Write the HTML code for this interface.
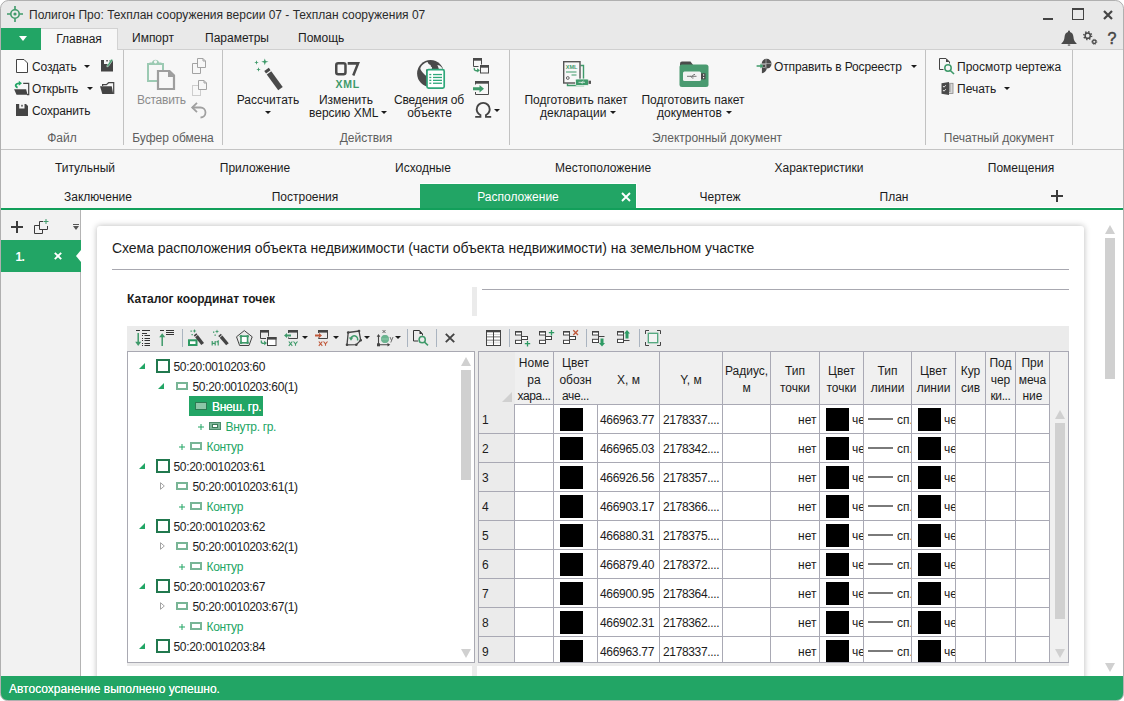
<!DOCTYPE html>
<html lang="ru">
<head>
<meta charset="utf-8">
<title>Полигон Про</title>
<style>
*{box-sizing:border-box;margin:0;padding:0}
html,body{width:1124px;height:701px;overflow:hidden;background:#fff}
body{font-family:"Liberation Sans",sans-serif;font-size:12px;color:#1c1c1c;position:relative}
.a{position:absolute}
.t{position:absolute;white-space:nowrap;line-height:14px;height:14px}
.c{text-align:center}
svg{position:absolute;overflow:visible}
#win{left:0;top:0;width:1124px;height:701px;border:1px solid #b5b5b5;border-radius:8px 8px 7px 7px;overflow:hidden;background:#fff}
#title{left:0;top:0;width:1124px;height:50px;background:#e9e9e9}
#ribbon{left:1px;top:50px;width:1122px;height:99px;background:#f7f7f7}
#ribline{left:1px;top:149px;width:1122px;height:1px;background:#c4c4c4}
.sep{position:absolute;top:50px;width:1px;height:95px;background:#c2c2c2}
.gl{color:#5e5e5e}
.dis{color:#9b9b9b}
.dd{position:absolute;width:0;height:0;border-left:3px solid transparent;border-right:3px solid transparent;border-top:3px solid #1c1c1c}
#dtabs{left:1px;top:150px;width:1122px;height:58px;background:#f7f7f7}
#gline{left:1px;top:208px;width:1122px;height:2px;background:#22a565}
#status{left:1px;top:676px;width:1122px;height:24px;background:#22a565}
#lpanel{left:1px;top:210px;width:79px;height:466px;background:#f2f2f2}
#card{left:97px;top:226px;width:987px;height:460px;background:#fff;border-radius:3px;box-shadow:0 0 6px rgba(0,0,0,.28)}
.hl{position:absolute;height:1px;background:#a8a8b0}
.tsep{position:absolute;top:329px;width:1px;height:18px;background:#aab4c0}
.g{color:#22a565}
</style>
</head>
<body>

<div class="a" id="win">
<!-- TITLE + MENU -->
<div class="a" id="title" style="left:-1px;top:-1px"></div>
</div>
<!-- app icon -->
<svg style="left:7px;top:6px" width="16" height="16" viewBox="0 0 16 16"><g fill="none" stroke="#3f9a6a" stroke-width="1.6"><circle cx="8" cy="8" r="4.2"/><path d="M8 0v3.5M8 12.5V16M0 8h3.5M12.5 8H16"/></g><circle cx="8" cy="8" r="1.6" fill="#3f9a6a"/></svg>
<div class="t" style="left:29px;top:8px;color:#2b2b2b">Полигон Про: Техплан сооружения версии 07 - Техплан сооружения 07</div>
<!-- window controls -->
<div class="a" style="left:1043px;top:18px;width:10px;height:2px;background:#444"></div>
<div class="a" style="left:1072px;top:8px;width:12px;height:12px;border:1px solid #444;border-top-width:2px"></div>
<svg style="left:1103px;top:10px" width="10" height="10" viewBox="0 0 10 10"><path d="M1 1l8 8M9 1l-8 8" stroke="#444" stroke-width="2.2" fill="none"/></svg>
<!-- bell -->
<svg style="left:1061px;top:30px" width="16" height="16" viewBox="0 0 16 16"><path d="M8 0.6a1 1 0 0 1 1 1v0.5c2.3 0.6 3.3 2.6 3.5 5.2c0.2 2.6 0.9 4.3 3 6v0.7H0.5v-0.7c2.1-1.7 2.8-3.4 3-6C3.700 4.700 4.700 2.700 7 2.100V1.600a1 1 0 0 1 1-1z" fill="#4a4a4a"/><rect x="6.800" y="14.500" width="2.400" height="1.100" fill="#4a4a4a"/></svg>
<!-- gears -->
<svg style="left:1083px;top:31px" width="15" height="14" viewBox="0 0 15 14"><g fill="none" stroke="#4a4a4a"><circle cx="4.700" cy="4.700" r="2.600" stroke-width="1.500"/><circle cx="4.700" cy="4.700" r="3.900" stroke-width="1.500" stroke-dasharray="1.400 1.660"/><circle cx="11.300" cy="10.800" r="1.700" stroke-width="1.300"/><circle cx="11.300" cy="10.800" r="2.500" stroke-width="1" stroke-dasharray="1 0.960"/></g></svg>
<div class="t" style="left:1107.500px;top:30.500px;font-size:16px;color:#444;line-height:16px;height:16px;-webkit-text-stroke:0.500px #444">?</div>

<!-- menu row -->
<div class="a" style="left:1px;top:28px;width:40px;height:22px;background:#22a565"></div>
<svg style="left:19px;top:36px" width="8" height="5" viewBox="0 0 8 5"><path d="M0 0H8L4 5Z" fill="#fff"/></svg>
<div class="a" style="left:41px;top:28px;width:77px;height:22px;background:#f7f7f7;border:1px solid #d2d2d2;border-bottom:none;border-left:none"></div>
<div class="t c" style="left:41px;top:32px;width:76px">Главная</div>
<div class="t" style="left:132px;top:31px">Импорт</div>
<div class="t" style="left:205px;top:31px">Параметры</div>
<div class="t" style="left:298px;top:31px">Помощь</div>
<div class="a" style="left:118px;top:49px;width:1005px;height:1px;background:#d0d0d0"></div>

<!-- RIBBON -->
<div class="a" id="ribbon"></div>
<div class="a" id="ribline"></div>
<div class="sep" style="left:123px"></div>
<div class="sep" style="left:222px"></div>
<div class="sep" style="left:509px"></div>
<div class="sep" style="left:925px"></div>
<div class="sep" style="left:1072px"></div>

<!-- File group -->
<svg style="left:16px;top:59px" width="12" height="14" viewBox="0 0 12 14"><path d="M0.500 0.500H8L11.500 4V13.500H0.500Z" fill="#fff" stroke="#444" stroke-width="1"/></svg>
<div class="t" style="left:32px;top:60px;letter-spacing:-0.150px">Создать</div>
<div class="dd" style="left:84px;top:65px"></div>
<svg style="left:101px;top:59px" width="13" height="13" viewBox="0 0 13 13"><path d="M0 1H3V5H8.500V1H12V12.600H0Z" fill="#444"/><rect x="5.300" y="1" width="1.500" height="1.500" fill="#444"/><path d="M10.300 0L12 1L7.300 7.500L5.900 7.900L6 6.500Z" fill="#3f9a6a" stroke="#f7f7f7" stroke-width="0.500"/></svg>

<svg style="left:14px;top:81px" width="16" height="14" viewBox="0 0 16 14"><path d="M9.200 2.400H14.700V13.700H13" fill="none" stroke="#444" stroke-width="1.200"/><path d="M0.100 8.200H12.100L13.600 13.800H2.500Z" fill="#444"/><path d="M3.600 6.600C0.800 5.500 1 2.400 5.200 2.300" fill="none" stroke="#22a565" stroke-width="1.800"/><path d="M4.800 -0.300L8 2.200L4.800 4.800Z" fill="#22a565"/></svg>
<div class="t" style="left:32px;top:82px;letter-spacing:-0.150px">Открыть</div>
<div class="dd" style="left:87px;top:87px"></div>
<svg style="left:100px;top:82px" width="15" height="12" viewBox="0 0 15 12"><path d="M2.600 4V2.600H6.400L8.600 0.700H13.700V12" fill="none" stroke="#444" stroke-width="1.200"/><path d="M0 4.200H11.700L13.200 12H2.300Z" fill="#444"/></svg>

<svg style="left:16px;top:104px" width="12" height="12" viewBox="0 0 12 12"><path d="M0 0h3.200v4.500h5.300V0H10L12 2V12H0Z" fill="#444"/><rect x="5.300" y="0.800" width="1.400" height="1.800" fill="#444"/></svg>
<div class="t" style="left:32px;top:104px;letter-spacing:-0.150px">Сохранить</div>
<div class="t c gl" style="left:32px;top:131px;width:60px">Файл</div>

<!-- Clipboard group -->
<svg style="left:147px;top:58px" width="29" height="33" viewBox="0 0 29 33"><path d="M1 6H16V23H1Z" fill="none" stroke="#9ccab3" stroke-width="2"/><path d="M2.500 6.500V4.500H5A3.600 3.600 0 0 1 12 4.500H14.500V6.500Z" fill="#9ccab3"/><circle cx="8.500" cy="3.800" r="1.600" fill="#f7f7f7"/><path d="M11 13H22.500L27 17.500V31H11Z" fill="#f7f7f7" stroke="#9e9e9e" stroke-width="2.200" stroke-linejoin="miter"/><path d="M21 12.500V19H27.500Z" fill="#9e9e9e"/></svg>
<div class="t dis" style="left:137px;top:93px;color:#8c8c8c;letter-spacing:-0.250px">Вставить</div>
<svg style="left:192px;top:58px" width="15" height="16" viewBox="0 0 15 16"><path d="M0.500 5.500H8.500V15.500H0.500Z" fill="#f7f7f7" stroke="#a3a3a3"/><path d="M5.500 0.500H11L13.500 3V9.500H5.500Z" fill="#f7f7f7" stroke="#a3a3a3"/><path d="M11 0.500V3H13.500" fill="none" stroke="#a3a3a3"/></svg>
<svg style="left:192px;top:80px" width="16" height="16" viewBox="0 0 16 16"><path d="M0.500 5.500H8.500V15.500H0.500Z" fill="none" stroke="#a3a3a3" stroke-dasharray="1 1"/><path d="M6.500 0.500H12L14.500 3V9.500H6.500Z" fill="#f7f7f7" stroke="#a3a3a3"/><path d="M12 0.500V3H14.500" fill="none" stroke="#a3a3a3"/></svg>
<svg style="left:191px;top:102px" width="16" height="16" viewBox="0 0 16 16"><path d="M1 5.500H9.500A5 5 0 0 1 9.500 15.500" fill="none" stroke="#a0a0a0" stroke-width="1.800"/><path d="M6 0.800L1.200 5.500L6 10.200" fill="none" stroke="#a0a0a0" stroke-width="1.800"/></svg>
<div class="t c gl" style="left:124px;top:131px;width:98px">Буфер обмена</div>

<!-- Actions group -->
<svg style="left:254px;top:58px" width="30" height="32" viewBox="0 0 30 32"><g fill="#3f9a6a"><path d="M10.800 0.500L11.700 3L14.500 3.800L11.700 4.600L10.800 7.200L9.900 4.600L7.200 3.800L9.900 3Z"/><path d="M2.500 2.200L3.100 3.900L4.800 4.500L3.100 5.100L2.500 6.800L1.900 5.100L0.200 4.500L1.900 3.900Z"/><path d="M4.500 9.200L5.100 10.900L6.800 11.500L5.100 12.100L4.500 13.800L3.900 12.100L2.200 11.500L3.900 10.900Z"/></g><g fill="#4a4a4a" transform="translate(1.300 1.300) rotate(-36 13 12.500)"><rect x="10.200" y="9.500" width="5.600" height="3"/><rect x="10.200" y="13.700" width="5.600" height="19.500"/></g></svg>
<div class="t c" style="left:228px;top:93px;width:80px">Рассчитать</div>
<div class="dd" style="left:265px;top:111px"></div>

<svg style="left:334.500px;top:62px" width="25" height="14" viewBox="0 0 26 14" preserveAspectRatio="none"><rect x="1.300" y="1.300" width="9.600" height="11" rx="2" fill="none" stroke="#4a4a4a" stroke-width="2.600"/><path d="M13.200 1.400H24L19 13.500" fill="none" stroke="#4a4a4a" stroke-width="2.600" stroke-linejoin="miter"/></svg>
<div class="t" style="left:335.500px;top:78px;font-size:10.500px;font-weight:bold;color:#3f9a6a;letter-spacing:0.700px;line-height:12px;height:12px">XML</div>
<div class="t c" style="left:300px;top:93px;width:92px">Изменить</div>
<div class="t" style="left:309px;top:106px">версию XML</div>
<div class="dd" style="left:381px;top:111px"></div>

<svg style="left:417px;top:60px" width="29" height="29" viewBox="0 0 29 29"><circle cx="13.500" cy="13.500" r="13.400" fill="#4a4a4a"/><path d="M3.300 8.500C3.800 6.500 5.500 4.300 8 2.900C9 2.300 10 2 10.600 2L11.300 3.600L12.400 4.400L13.600 5L13.900 6.500L15 7.200L14.800 9.500H9V15.800C7.500 14.500 5.500 12.500 4.500 11C3.800 10 3.400 9.300 3.300 8.500Z" fill="#f7f7f7"/><path d="M20.300 5L22.500 5.600C23.800 6.400 25 7.600 25.800 9H21.800L21.200 7Z" fill="#f7f7f7"/><rect x="10" y="9.700" width="17.200" height="18.400" rx="1.500" fill="#fff" stroke="#2fa87a" stroke-width="1.700"/><g fill="#2fa87a"><rect x="12.300" y="13.900" width="2" height="1.300"/><rect x="16" y="13.900" width="9" height="1.300"/><rect x="12.300" y="16.800" width="2" height="1.300"/><rect x="16" y="16.800" width="9" height="1.300"/><rect x="12.300" y="19.700" width="2" height="1.300"/><rect x="16" y="19.700" width="9" height="1.300"/><rect x="12.300" y="22.600" width="2" height="1.300"/><rect x="16" y="22.600" width="9" height="1.300"/></g></svg>
<div class="t c" style="left:382px;top:93px;width:94px;letter-spacing:-0.150px">Сведения об</div>
<div class="t c" style="left:382px;top:106px;width:95px">объекте</div>

<svg style="left:473px;top:58px" width="16" height="16" viewBox="0 0 16 16"><path d="M8.500 6.500V0.500H0.500V8.500H5.500" fill="none" stroke="#4a4a4a"/><rect x="0" y="0" width="9" height="2.700" fill="#4a4a4a"/><rect x="7.500" y="7.500" width="8" height="7.500" fill="#f7f7f7" stroke="#4a4a4a"/><rect x="7" y="7" width="9" height="2.700" fill="#4a4a4a"/><path d="M1.300 9.800C0.800 12.500 3 13.300 5 12.300" fill="none" stroke="#3f9a6a" stroke-width="1.300"/><path d="M4 10.200L7 12.200L4.300 14.600Z" fill="#3f9a6a"/></svg>
<svg style="left:473px;top:81px" width="16" height="14" viewBox="0 0 16 14"><path d="M2.500 3.500V1H15.500V13.500H2.500V11" fill="none" stroke="#4a4a4a"/><rect x="2" y="0" width="14" height="2.700" fill="#4a4a4a"/><path d="M0 6.200H6.500V4L11 7.700L6.500 11.400V9.200H0Z" fill="#3f9a6a"/></svg>
<svg style="left:475px;top:102px" width="17" height="16" viewBox="0 0 17 16"><path d="M0.200 14.900H5.400V13C3 11.800 1.700 9.700 1.700 7.300C1.700 3.600 4.600 0.900 8.200 0.900C11.800 0.900 14.700 3.600 14.700 7.300C14.700 9.700 13.400 11.800 11 13V14.900H16.200" fill="none" stroke="#444" stroke-width="1.900" stroke-linejoin="miter"/></svg>
<div class="dd" style="left:494px;top:109px"></div>
<div class="t c gl" style="left:316px;top:131px;width:100px">Действия</div>

<!-- E-doc group -->
<svg style="left:563px;top:61px" width="29" height="26" viewBox="0 0 29 26"><path d="M17.500 4.500H20.500V24.500H4.500V22.500" fill="none" stroke="#3f9a6a" stroke-width="1.400"/><rect x="0.700" y="0.700" width="16.300" height="21.300" fill="#f7f7f7" stroke="#555" stroke-width="1.400"/><text x="2.800" y="8.300" font-family="Liberation Sans" font-size="5.500" font-weight="bold" fill="#3f9a6a">XML</text><path d="M3 11H13.500M8.500 14H13.500" stroke="#3f9a6a" stroke-width="1.100"/><circle cx="4.800" cy="17" r="1.400" fill="none" stroke="#555" stroke-width="0.900"/><rect x="12.500" y="18" width="13" height="6.500" rx="1.200" fill="#3f9a6a" stroke="#f7f7f7" stroke-width="0.800"/><rect x="25.500" y="19.700" width="2.500" height="3.200" fill="#555"/><path d="M15.500 21.300H22M19 21.300L20.500 20M18 21.300L19.500 22.600" stroke="#fff" stroke-width="0.700" fill="none"/></svg>
<div class="t c" style="left:516px;top:93px;width:120px">Подготовить пакет</div>
<div class="t" style="left:540px;top:106px">декларации</div>
<div class="dd" style="left:610px;top:111px"></div>

<svg style="left:679px;top:61px" width="30" height="26" viewBox="0 0 30 26"><path d="M1 5V2.500Q1 0.500 3 0.500H11.500L14.500 4.500Z" fill="#4a4a4a"/><rect x="0.500" y="3.500" width="29" height="22.500" rx="2.500" fill="#4a9a70"/><rect x="4" y="10.500" width="18" height="9.500" rx="1.500" fill="#f2f2f2"/><rect x="22" y="12.300" width="4.500" height="6" fill="#4a4a4a"/><rect x="24" y="13.300" width="1.200" height="1.300" fill="#f2f2f2"/><rect x="24" y="16" width="1.200" height="1.300" fill="#f2f2f2"/><path d="M8 15.300H17.500M13 15.300L15 13.500H16M11.500 15.300L13.500 17H14.500" stroke="#555" stroke-width="0.800" fill="none"/></svg>
<div class="t c" style="left:633px;top:93px;width:120px">Подготовить пакет</div>
<div class="t" style="left:657px;top:106px">документов</div>
<div class="dd" style="left:726px;top:111px"></div>

<svg style="left:756px;top:58px" width="16" height="16" viewBox="0 0 16 16"><circle cx="10.600" cy="5.700" r="4.900" fill="#4a4a4a"/><path d="M5.900 7V15.200C8.300 14.700 10.200 13.200 10.900 10.400Z" fill="#4a4a4a"/><path d="M10 0.800V10.500M5.800 5.600H15.500" stroke="#cfcfcf" stroke-width="0.600"/><rect x="6.700" y="6.500" width="3" height="3" fill="#4a4a4a" stroke="#cfcfcf" stroke-width="0.600"/><path d="M0.600 7.300H4.400V5.600L7.400 8L4.400 10.400V8.700H0.600Z" fill="#3f9a6a"/></svg>
<div class="t" style="left:774px;top:60px;letter-spacing:-0.150px">Отправить в Росреестр</div>
<div class="dd" style="left:911px;top:65px"></div>
<div class="t c gl" style="left:637px;top:131px;width:160px">Электронный документ</div>

<!-- Print group -->
<svg style="left:939px;top:58px" width="16" height="17" viewBox="0 0 16 17"><path d="M10.500 5.500V4L7 0.500H0.500V11.500H4.500" fill="none" stroke="#444"/><path d="M7 0.500V4H10.500Z" fill="#444"/><circle cx="9" cy="10" r="3.200" fill="#f7f7f7" stroke="#3f9a6a" stroke-width="1.500"/><path d="M11.300 12.500L15 16" stroke="#3f9a6a" stroke-width="1.700"/></svg>
<div class="t" style="left:957px;top:60px">Просмотр чертежа</div>
<svg style="left:940.800px;top:82px" width="13" height="13" viewBox="0 0 13 13"><rect x="6" y="1.300" width="6" height="10.200" fill="#d6d6d6" stroke="#8a8a8a" stroke-width="0.800"/><path d="M0.500 1.200L8 0V13L0.500 11.800Z" fill="#4a4a4a"/><path d="M2 4L3 5.200L4.800 3.200M2 8L3 9.200L4.800 7.200" stroke="#f2f2f2" stroke-width="0.900" fill="none"/><path d="M8 3H9.500M8 5H9.500M8 7H9.500M8 9H9.500" stroke="#4a4a4a" stroke-width="0.800"/></svg>
<div class="t" style="left:957px;top:82px">Печать</div>
<div class="dd" style="left:1004px;top:87px"></div>
<div class="t c gl" style="left:929px;top:131px;width:140px">Печатный документ</div>

<!-- DOC TABS -->
<div class="a" id="dtabs"></div>
<div class="a" id="gline" style="background:#129f5a"></div>
<div class="t c" style="left:35px;top:161px;width:100px">Титульный</div>
<div class="t c" style="left:205px;top:161px;width:100px">Приложение</div>
<div class="t c" style="left:373px;top:161px;width:100px">Исходные</div>
<div class="t c" style="left:543px;top:161px;width:120px">Местоположение</div>
<div class="t c" style="left:759px;top:161px;width:120px">Характеристики</div>
<div class="t c" style="left:971px;top:161px;width:100px">Помещения</div>
<div class="t c" style="left:48px;top:190px;width:100px">Заключение</div>
<div class="t c" style="left:255px;top:190px;width:100px">Построения</div>
<div class="a" style="left:420px;top:183px;width:217px;height:25px;background:#fff"></div>
<div class="a" style="left:636px;top:207px;width:487px;height:1px;background:#fff"></div>
<div class="a" style="left:420px;top:184px;width:216px;height:24px;background:#22a565"></div>
<div class="t c" style="left:458px;top:190px;width:120px;color:#fff">Расположение</div>
<svg style="left:621px;top:192px" width="10" height="10" viewBox="0 0 10 10"><path d="M1 1L9 9M9 1L1 9" stroke="#fff" stroke-width="1.900" fill="none"/></svg>
<div class="t c" style="left:670px;top:190px;width:100px">Чертеж</div>
<div class="t c" style="left:844px;top:190px;width:100px">План</div>
<svg style="left:1051px;top:190px" width="12" height="12" viewBox="0 0 12 12"><path d="M6 0V12M0 6H12" stroke="#3c3c3c" stroke-width="2" fill="none"/></svg>

<!-- LEFT PANEL -->
<div class="a" id="lpanel"></div>
<div class="a" style="left:80px;top:210px;width:1px;height:466px;background:#b4b4b4"></div>
<svg style="left:11px;top:221px" width="12" height="12" viewBox="0 0 12 12"><path d="M6 0V12M0 6H12" stroke="#3c3c3c" stroke-width="2" fill="none"/></svg>
<svg style="left:34px;top:219px" width="15" height="15" viewBox="0 0 15 15"><path d="M9 2.500H5.500V10.500H13.500V7" fill="none" stroke="#3c3c3c"/><path d="M5.500 6.500H0.500V14.500H8.500V10.500" fill="none" stroke="#3c3c3c"/><path d="M12 0V5M9.500 2.500H14.500" stroke="#3f9a6a" stroke-width="1"/></svg>
<div class="a" style="left:73px;top:224px;width:6px;height:1px;background:#555"></div>
<div class="a" style="left:73px;top:226px;width:0;height:0;border-left:3px solid transparent;border-right:3px solid transparent;border-top:4px solid #555"></div>
<div class="a" style="left:1px;top:240px;width:80px;height:32px;background:#22a565"></div>
<div class="a" style="left:76px;top:250px;width:0;height:0;border-top:6px solid transparent;border-bottom:6px solid transparent;border-right:5px solid #fff"></div>
<div class="t" style="left:15.500px;top:250px;color:#fff;font-weight:bold;font-size:12px;letter-spacing:-0.600px">1.</div>
<svg style="left:54px;top:252px" width="8" height="8" viewBox="0 0 8 8"><path d="M0.800 0.800L7.200 7.200M7.200 0.800L0.800 7.200" stroke="#fff" stroke-width="1.900" fill="none"/></svg>

<!-- CARD -->
<div class="a" style="left:81px;top:210px;width:1042px;height:466px;overflow:hidden">
<div class="a" id="card" style="left:16px;top:16px"></div>
</div>
<div class="t" style="left:112px;top:240px;font-size:14px;line-height:16px;height:16px;letter-spacing:-0.050px">Схема расположения объекта недвижимости (части объекта недвижимости) на земельном участке</div>
<div class="hl" style="left:112px;top:269px;width:957px"></div>
<div class="t" style="left:127px;top:292px;font-weight:bold">Каталог координат точек</div>
<div class="a" style="left:472px;top:287px;width:5px;height:29px;background:#ebebeb"></div>
<div class="hl" style="left:482px;top:289px;width:587px"></div>
<!-- outer scrollbar -->
<div class="a" style="left:1105px;top:225px;width:0;height:0;border-left:5px solid transparent;border-right:5px solid transparent;border-bottom:9px solid #d0d0d0"></div>
<div class="a" style="left:1105px;top:238px;width:10px;height:141px;background:#d0d0d0"></div>
<div class="a" style="left:1105px;top:663px;width:0;height:0;border-left:5px solid transparent;border-right:5px solid transparent;border-top:9px solid #d0d0d0"></div>

<!-- PANEL BG + TOOLBARS -->
<div class="a" style="left:127px;top:326px;width:942px;height:340px;background:#ebebeb"></div>
<div class="a" style="left:472px;top:663px;width:5px;height:13px;background:#ebebeb"></div>
<!-- sort down -->
<svg style="left:135px;top:330px" width="16" height="16" viewBox="0 0 16 16"><g stroke="#333" stroke-width="1" fill="none"><path d="M1 0.500H5M7 0.500H15"/><path d="M7 3.500H12"/><path d="M7 5.500H8M9.500 5.500H15M7 8.500H8M9.500 8.500H15M7 10.500H8M9.500 10.500H15M7 13.500H8M9.500 13.500H15M7 15.500H8M9.500 15.500H15"/></g><path d="M3.200 3V13" stroke="#3f9a6a" stroke-width="1.500"/><path d="M0.200 11.800H6.200L3.200 16Z" fill="#3f9a6a"/></svg>
<!-- sort up -->
<svg style="left:159px;top:330px" width="16" height="16" viewBox="0 0 16 16"><g stroke="#333" stroke-width="1" fill="none"><path d="M1 0.500H5M7 0.500H15M7 2.500H15M7 4.500H15"/></g><path d="M3.200 6V16" stroke="#3f9a6a" stroke-width="1.500"/><path d="M0.200 7.300H6.200L3.200 3.200Z" fill="#3f9a6a"/></svg>
<div class="tsep" style="left:182px"></div>
<!-- wand + rect -->
<svg style="left:188px;top:329px" width="16" height="17" viewBox="0 0 16 17"><rect x="1" y="11.300" width="7.500" height="4.700" fill="#fff" stroke="#2e9a63" stroke-width="2"/><g fill="#444" transform="rotate(-38 8 6.500)"><rect x="6.300" y="5" width="3.400" height="1.600"/><rect x="6.300" y="7.300" width="3.400" height="10"/></g><g fill="#3f9a6a"><path d="M6.500 0L7.100 1.500L8.600 2L7.100 2.500L6.500 4L5.900 2.500L4.400 2L5.900 1.500Z"/><rect x="2.500" y="1.500" width="1.300" height="1.300"/><rect x="3.500" y="5" width="1.300" height="1.300"/></g></svg>
<!-- wand + H1 -->
<svg style="left:211px;top:329px" width="18" height="17" viewBox="0 0 18 17"><g fill="#444" transform="rotate(-40 9.500 7)"><rect x="7.800" y="5.500" width="3.400" height="1.600"/><rect x="7.800" y="7.800" width="3.400" height="10"/></g><g fill="#3f9a6a"><path d="M6 0.500L6.600 2L8.100 2.500L6.600 3L6 4.500L5.400 3L3.900 2.500L5.400 2Z"/><rect x="2" y="2.500" width="1.300" height="1.300"/><rect x="3.500" y="5.500" width="1.300" height="1.300"/></g><path d="M1.200 12V16.500M4.200 12V16.500M1.200 14.300H4.200M5.500 13L7.200 12V16.500" stroke="#3f9a6a" stroke-width="1.200" fill="none"/></svg>
<!-- pentagon -->
<svg style="left:236px;top:330px" width="17" height="16" viewBox="0 0 17 16"><path d="M8.300 0.600L16.200 6.800L13 15.500H3.600L0.500 6.800Z" fill="none" stroke="#444" stroke-width="1"/><rect x="5" y="6.200" width="6.600" height="6.600" fill="#fff" stroke="#3f9a6a" stroke-width="1.600"/><g fill="#3f9a6a"><circle cx="5" cy="6.200" r="1.300"/><circle cx="11.600" cy="6.200" r="1.300"/><circle cx="5" cy="12.800" r="1.300"/><circle cx="11.600" cy="12.800" r="1.300"/></g></svg>
<!-- two windows -->
<svg style="left:260px;top:330px" width="17" height="16" viewBox="0 0 17 16"><path d="M8.500 6.500V0.500H0.500V8.500H6" fill="none" stroke="#444"/><rect x="0" y="0" width="9" height="2.600" fill="#444"/><rect x="7.500" y="7.500" width="8.500" height="8" fill="#fff" stroke="#444"/><rect x="7" y="7" width="9.500" height="2.600" fill="#444"/><path d="M1.300 10.500C0.800 13.300 3 14 5 13" fill="none" stroke="#3f9a6a" stroke-width="1.300"/><path d="M4 10.800L7 13L4.300 15.300Z" fill="#3f9a6a"/></svg>
<!-- XY green -->
<svg style="left:284px;top:330px" width="15" height="16" viewBox="0 0 15 16"><path d="M4.500 3V0.500H13.500V8.500H4.500V7.500" fill="none" stroke="#444"/><rect x="4" y="0" width="10" height="2.600" fill="#444"/><path d="M7 4.500H3V3L0 5.500L3 8V6.500H7Z" fill="#3f9a6a"/><path d="M4.800 11.500L8.300 15.800M8.300 11.500L4.800 15.800M9.500 11.500L11.500 13.800L13.500 11.500M11.500 13.800V15.800" stroke="#3f9a6a" stroke-width="1.100" fill="none"/></svg>
<div class="dd" style="left:302px;top:336px"></div>
<!-- XY red -->
<svg style="left:315px;top:330px" width="15" height="16" viewBox="0 0 15 16"><path d="M3.500 3V0.500H12.500V8.500H3.500V7.500" fill="none" stroke="#444"/><rect x="3" y="0" width="10" height="2.600" fill="#444"/><path d="M0 4.500H4V3L7 5.500L4 8V6.500H0Z" fill="#c0583a"/><path d="M3.800 11.500L7.300 15.800M7.300 11.500L3.800 15.800M8.500 11.500L10.500 13.800L12.500 11.500M10.500 13.800V15.800" stroke="#c0583a" stroke-width="1.100" fill="none"/></svg>
<div class="dd" style="left:333px;top:336px"></div>
<!-- polygon rotate -->
<svg style="left:346px;top:330px" width="16" height="16" viewBox="0 0 16 16"><path d="M2.200 2.500L13 1L14.700 10.200L10.300 14.700L1 14.800Z" fill="none" stroke="#444" stroke-width="1.300"/><g fill="#444"><circle cx="2.200" cy="2.500" r="1.300"/><circle cx="13" cy="1" r="1.300"/><circle cx="14.700" cy="10.200" r="1.300"/><circle cx="10.300" cy="14.700" r="1.300"/><circle cx="1" cy="14.800" r="1.300"/></g><path d="M11.500 10.500A3.500 3.500 0 1 0 4.800 8.500" fill="none" stroke="#3f9a6a" stroke-width="1.500"/><path d="M2.800 7.500H7.300L5 10.800Z" fill="#3f9a6a"/></svg>
<div class="dd" style="left:364px;top:336px"></div>
<!-- axis -->
<svg style="left:376px;top:329px" width="18" height="18" viewBox="0 0 18 18"><path d="M2.500 16V6M2.500 15.700H13" stroke="#444" stroke-width="1.100" fill="none"/><path d="M0.700 7.800L2.500 5L4.300 7.800ZM11.500 13.900L14.300 15.700L11.500 17.500Z" fill="#444"/><rect x="1" y="14.300" width="3" height="3" fill="#444"/><circle cx="9" cy="10" r="3.900" fill="#4fa57b"/><path d="M5.200 10H12.800M9 6.200V13.800M7 6.800V13.200M11 6.800V13.200" stroke="#bfe0cf" stroke-width="0.500"/><path d="M6.500 1L9.500 4M9.500 1L6.500 4" stroke="#444" stroke-width="0.800"/><path d="M14 8L15.500 11.500M17 8L14.800 13.500" stroke="#666" stroke-width="0.900" fill="none"/></svg>
<div class="dd" style="left:395px;top:336px"></div>
<div class="tsep" style="left:407px"></div>
<!-- doc+magnifier -->
<svg style="left:413px;top:330px" width="16" height="16" viewBox="0 0 16 16"><path d="M9.500 5.500V4L6.500 0.500H0.500V11H5" fill="none" stroke="#333"/><path d="M6.500 0.500V4H9.500Z" fill="#333"/><circle cx="9.200" cy="9.700" r="3.100" fill="#ebebeb" stroke="#3f9a6a" stroke-width="1.500"/><path d="M11.400 12L15 15.300" stroke="#3f9a6a" stroke-width="1.600"/></svg>
<div class="tsep" style="left:436px"></div>
<svg style="left:445px;top:333px" width="10" height="10" viewBox="0 0 10 10"><path d="M0.800 0.800L9.200 9.200M9.200 0.800L0.800 9.200" stroke="#444" stroke-width="1.900" fill="none"/></svg>

<!-- GRID TOOLBAR -->
<svg style="left:486px;top:330px" width="15" height="16" viewBox="0 0 15 16"><rect x="0.500" y="0.500" width="14" height="15" fill="#fff" stroke="#444"/><rect x="0" y="0" width="15" height="2.300" fill="#444"/><rect x="1" y="6" width="13" height="1.600" fill="#a8a8a8"/><rect x="1" y="9.500" width="13" height="1.600" fill="#a8a8a8"/><path d="M1 4.500H14M1 12.800H14" stroke="#d0d0d0" stroke-width="0.800"/><path d="M7.500 2V15.500" stroke="#444" stroke-width="1"/></svg>
<div class="tsep" style="left:509px"></div>
<svg style="left:515px;top:331px" width="16" height="16" viewBox="0 0 16 16"><g fill="#fff" stroke="#444" stroke-width="1"><rect x="0.500" y="0.500" width="6" height="3.500"/><rect x="6.500" y="5.500" width="6" height="3"/><rect x="0.500" y="9.300" width="6" height="3.200"/></g><rect x="0" y="0" width="7" height="1.600" fill="#444"/><path d="M6.500 4V9.500" stroke="#444"/><path d="M12.500 10V15.500M9.800 12.700H15.200" stroke="#2e9a63" stroke-width="1.300"/></svg>
<svg style="left:539px;top:330px" width="16" height="16" viewBox="0 0 16 16"><g fill="#fff" stroke="#444" stroke-width="1"><rect x="0.500" y="1.500" width="6" height="3.500"/><rect x="6.500" y="6.500" width="6" height="3"/><rect x="0.500" y="10.300" width="6" height="3.200"/></g><rect x="0" y="1" width="7" height="1.600" fill="#444"/><path d="M6.500 5V10.500" stroke="#444"/><path d="M12.500 0V5.400M9.800 2.700H15.200" stroke="#2e9a63" stroke-width="1.300"/></svg>
<svg style="left:563px;top:330px" width="16" height="16" viewBox="0 0 16 16"><g fill="#fff" stroke="#444" stroke-width="1"><rect x="0.500" y="1.500" width="6" height="3.500"/><rect x="6.500" y="6.500" width="6" height="3"/><rect x="0.500" y="10.300" width="6" height="3.200"/></g><rect x="0" y="1" width="7" height="1.600" fill="#444"/><path d="M6.500 5V10.500" stroke="#444"/><path d="M10.300 0.300L15 5M15 0.300L10.300 5" stroke="#c0583a" stroke-width="1.300"/></svg>
<div class="tsep" style="left:586px"></div>
<svg style="left:592px;top:330px" width="14" height="17" viewBox="0 0 14 17"><g fill="#fff" stroke="#444" stroke-width="1"><rect x="0.500" y="1.500" width="6" height="3.500"/><rect x="0.500" y="9.300" width="6" height="3.200"/></g><rect x="0" y="1" width="7" height="1.600" fill="#444"/><path d="M6.500 5V11M6.500 6.500H12.500" stroke="#444" fill="none"/><path d="M8.500 8.500H11.500V13H13L10 16.500L7 13H8.500Z" fill="#2e9a63"/></svg>
<svg style="left:617px;top:329px" width="14" height="17" viewBox="0 0 14 17"><g fill="#fff" stroke="#444" stroke-width="1"><rect x="0.500" y="2.500" width="6" height="3.500"/><rect x="0.500" y="10.300" width="6" height="3.200"/></g><rect x="0" y="2" width="7" height="1.600" fill="#444"/><path d="M6.500 6V12M6.500 11.500H12.500" stroke="#444" fill="none"/><path d="M8.500 9.500H11.500V4.500H13L10 1L7 4.500H8.500Z" fill="#2e9a63"/></svg>
<div class="tsep" style="left:639px"></div>
<svg style="left:645px;top:330px" width="16" height="16" viewBox="0 0 16 16"><path d="M0.500 4V0.500H4M12 0.500H15.500V4M15.500 12V15.500H12M4 15.500H0.500V12" fill="none" stroke="#444" stroke-width="1"/><rect x="3.300" y="3.300" width="9.400" height="9.400" fill="#f3f3f3" stroke="#4fa57b" stroke-width="1.300"/></svg>

<!-- TREE -->
<div class="a" style="left:127px;top:351px;width:348px;height:312px;border:1px solid #a9a9b2;background:#fff"></div>
<div class="a" style="left:461px;top:357px;width:0;height:0;border-left:5px solid transparent;border-right:5px solid transparent;border-bottom:9px solid #d0d0d0"></div>
<div class="a" style="left:461px;top:370px;width:10px;height:110px;background:#d0d0d0"></div>
<div class="a" style="left:461px;top:649px;width:0;height:0;border-left:5px solid transparent;border-right:5px solid transparent;border-top:9px solid #d0d0d0"></div>
<svg style="left:139px;top:363px" width="6" height="6" viewBox="0 0 6 6"><path d="M6 0V6H0Z" fill="#22a565"/></svg><div class="a" style="left:156px;top:359px;width:14px;height:14px;border:2px solid #21784e;background:#fff"></div><div class="t " style="left:173.5px;top:360px;letter-spacing:-0.330px">50:20:0010203:60</div>
<svg style="left:158px;top:383px" width="6" height="6" viewBox="0 0 6 6"><path d="M6 0V6H0Z" fill="#22a565"/></svg><div class="a" style="left:176px;top:382px;width:12px;height:8px;border:2px solid #78b596;background:#fff"></div><div class="t " style="left:192.5px;top:380px;letter-spacing:-0.330px">50:20:0010203:60(1)</div>
<div class="a" style="left:189px;top:396px;width:74px;height:20px;background:#22a565"></div><div class="a" style="left:195px;top:402px;width:12px;height:8px;border:1px solid #2c7a52;background:#8cc6a7"></div><div class="t " style="left:212.0px;top:400px;color:#fff;letter-spacing:-0.300px;text-shadow:0 0 0.6px #fff">Внеш. гр.</div>
<svg style="left:198px;top:424px" width="6" height="6" viewBox="0 0 6 6"><path d="M3 0V6M0 3H6" stroke="#22a565" stroke-width="1"/></svg><div class="a" style="left:209px;top:422px;width:12px;height:8px;border:1px solid #4d8c6b;background:#7fb89a"></div><div class="a" style="left:212px;top:424px;width:6px;height:4px;border:1px solid #3c7a58;background:#fff"></div><div class="t g" style="left:225.5px;top:420px;letter-spacing:-0.330px">Внутр. гр.</div>
<svg style="left:179px;top:444px" width="6" height="6" viewBox="0 0 6 6"><path d="M3 0V6M0 3H6" stroke="#22a565" stroke-width="1"/></svg><div class="a" style="left:190px;top:442px;width:12px;height:8px;border:2px solid #78b596;background:#fff"></div><div class="t g" style="left:206.5px;top:440px;letter-spacing:-0.330px">Контур</div>
<svg style="left:139px;top:463px" width="6" height="6" viewBox="0 0 6 6"><path d="M6 0V6H0Z" fill="#22a565"/></svg><div class="a" style="left:156px;top:459px;width:14px;height:14px;border:2px solid #21784e;background:#fff"></div><div class="t " style="left:173.5px;top:460px;letter-spacing:-0.330px">50:20:0010203:61</div>
<svg style="left:160px;top:482px" width="5" height="8" viewBox="0 0 5 8"><path d="M0.500 0.700L4.300 4L0.500 7.300Z" fill="#fff" stroke="#9a9a9a" stroke-width="0.900"/></svg><div class="a" style="left:176px;top:482px;width:12px;height:8px;border:2px solid #78b596;background:#fff"></div><div class="t " style="left:192.5px;top:480px;letter-spacing:-0.330px">50:20:0010203:61(1)</div>
<svg style="left:179px;top:504px" width="6" height="6" viewBox="0 0 6 6"><path d="M3 0V6M0 3H6" stroke="#22a565" stroke-width="1"/></svg><div class="a" style="left:190px;top:502px;width:12px;height:8px;border:2px solid #78b596;background:#fff"></div><div class="t g" style="left:206.5px;top:500px;letter-spacing:-0.330px">Контур</div>
<svg style="left:139px;top:523px" width="6" height="6" viewBox="0 0 6 6"><path d="M6 0V6H0Z" fill="#22a565"/></svg><div class="a" style="left:156px;top:519px;width:14px;height:14px;border:2px solid #21784e;background:#fff"></div><div class="t " style="left:173.5px;top:520px;letter-spacing:-0.330px">50:20:0010203:62</div>
<svg style="left:160px;top:542px" width="5" height="8" viewBox="0 0 5 8"><path d="M0.500 0.700L4.300 4L0.500 7.300Z" fill="#fff" stroke="#9a9a9a" stroke-width="0.900"/></svg><div class="a" style="left:176px;top:542px;width:12px;height:8px;border:2px solid #78b596;background:#fff"></div><div class="t " style="left:192.5px;top:540px;letter-spacing:-0.330px">50:20:0010203:62(1)</div>
<svg style="left:179px;top:564px" width="6" height="6" viewBox="0 0 6 6"><path d="M3 0V6M0 3H6" stroke="#22a565" stroke-width="1"/></svg><div class="a" style="left:190px;top:562px;width:12px;height:8px;border:2px solid #78b596;background:#fff"></div><div class="t g" style="left:206.5px;top:560px;letter-spacing:-0.330px">Контур</div>
<svg style="left:139px;top:583px" width="6" height="6" viewBox="0 0 6 6"><path d="M6 0V6H0Z" fill="#22a565"/></svg><div class="a" style="left:156px;top:579px;width:14px;height:14px;border:2px solid #21784e;background:#fff"></div><div class="t " style="left:173.5px;top:580px;letter-spacing:-0.330px">50:20:0010203:67</div>
<svg style="left:160px;top:602px" width="5" height="8" viewBox="0 0 5 8"><path d="M0.500 0.700L4.300 4L0.500 7.300Z" fill="#fff" stroke="#9a9a9a" stroke-width="0.900"/></svg><div class="a" style="left:176px;top:602px;width:12px;height:8px;border:2px solid #78b596;background:#fff"></div><div class="t " style="left:192.5px;top:600px;letter-spacing:-0.330px">50:20:0010203:67(1)</div>
<svg style="left:179px;top:624px" width="6" height="6" viewBox="0 0 6 6"><path d="M3 0V6M0 3H6" stroke="#22a565" stroke-width="1"/></svg><div class="a" style="left:190px;top:622px;width:12px;height:8px;border:2px solid #78b596;background:#fff"></div><div class="t g" style="left:206.5px;top:620px;letter-spacing:-0.330px">Контур</div>
<svg style="left:139px;top:643px" width="6" height="6" viewBox="0 0 6 6"><path d="M6 0V6H0Z" fill="#22a565"/></svg><div class="a" style="left:156px;top:639px;width:14px;height:14px;border:2px solid #21784e;background:#fff"></div><div class="t " style="left:173.5px;top:640px;letter-spacing:-0.330px">50:20:0010203:84</div>
<!-- GRID -->
<div class="a" style="left:478px;top:351px;width:591px;height:312px;background:#fff;border:1px solid #a9a9b4;overflow:hidden"></div>
<div class="a" style="left:479px;top:352px;width:36px;height:310px;background:#ebebeb"></div>
<div class="a" style="left:515px;top:352px;width:553px;height:52px;background:#f0f0f0"></div>
<svg style="left:502px;top:392px" width="10" height="10" viewBox="0 0 10 10"><path d="M10 0V10H0Z" fill="#d0d0d0"/></svg>
<div class="a" style="left:514px;top:404px;width:1px;height:258px;background:#a9a9b4"></div>
<div class="a" style="left:553px;top:352px;width:1px;height:310px;background:#a9a9b4"></div>
<div class="a" style="left:597px;top:404px;width:1px;height:258px;background:#a9a9b4"></div>
<div class="a" style="left:659px;top:352px;width:1px;height:310px;background:#a9a9b4"></div>
<div class="a" style="left:722px;top:352px;width:1px;height:310px;background:#a9a9b4"></div>
<div class="a" style="left:770px;top:352px;width:1px;height:310px;background:#a9a9b4"></div>
<div class="a" style="left:819px;top:352px;width:1px;height:310px;background:#a9a9b4"></div>
<div class="a" style="left:863px;top:352px;width:1px;height:310px;background:#a9a9b4"></div>
<div class="a" style="left:911px;top:352px;width:1px;height:310px;background:#a9a9b4"></div>
<div class="a" style="left:955px;top:352px;width:1px;height:310px;background:#a9a9b4"></div>
<div class="a" style="left:985px;top:352px;width:1px;height:310px;background:#a9a9b4"></div>
<div class="a" style="left:1015px;top:352px;width:1px;height:310px;background:#a9a9b4"></div>
<div class="a" style="left:1049px;top:352px;width:1px;height:310px;background:#a9a9b4"></div>
<div class="a" style="left:514px;top:404px;width:536px;height:1px;background:#a9a9b4"></div>
<div class="a" style="left:479px;top:433px;width:571px;height:1px;background:#a9a9b4"></div>
<div class="a" style="left:479px;top:462px;width:571px;height:1px;background:#a9a9b4"></div>
<div class="a" style="left:479px;top:491px;width:571px;height:1px;background:#a9a9b4"></div>
<div class="a" style="left:479px;top:520px;width:571px;height:1px;background:#a9a9b4"></div>
<div class="a" style="left:479px;top:549px;width:571px;height:1px;background:#a9a9b4"></div>
<div class="a" style="left:479px;top:578px;width:571px;height:1px;background:#a9a9b4"></div>
<div class="a" style="left:479px;top:607px;width:571px;height:1px;background:#a9a9b4"></div>
<div class="a" style="left:479px;top:636px;width:571px;height:1px;background:#a9a9b4"></div>
<div class="t c" style="left:515px;top:356px;width:38px">Номе</div><div class="t c" style="left:515px;top:373px;width:38px">ра</div><div class="t c" style="left:515px;top:389px;width:38px;letter-spacing:-0.400px">хара...</div>
<div class="t c" style="left:554px;top:356px;width:43px">Цвет</div><div class="t c" style="left:554px;top:373px;width:43px">обозн</div><div class="t c" style="left:554px;top:389px;width:43px;letter-spacing:-0.400px">аче...</div>
<div class="t c" style="left:598px;top:373px;width:61px">X, м</div>
<div class="t c" style="left:660px;top:373px;width:62px">Y, м</div>
<div class="t c" style="left:723px;top:364px;width:47px">Радиус,</div><div class="t c" style="left:723px;top:381px;width:47px">м</div>
<div class="t c" style="left:771px;top:364px;width:48px">Тип</div><div class="t c" style="left:771px;top:381px;width:48px">точки</div>
<div class="t c" style="left:820px;top:364px;width:43px">Цвет</div><div class="t c" style="left:820px;top:381px;width:43px">точки</div>
<div class="t c" style="left:864px;top:364px;width:47px">Тип</div><div class="t c" style="left:864px;top:381px;width:47px">линии</div>
<div class="t c" style="left:912px;top:364px;width:43px">Цвет</div><div class="t c" style="left:912px;top:381px;width:43px">линии</div>
<div class="t c" style="left:956px;top:364px;width:29px">Кур</div><div class="t c" style="left:956px;top:381px;width:29px">сив</div>
<div class="t c" style="left:986px;top:356px;width:29px">Под</div><div class="t c" style="left:986px;top:373px;width:29px">чер</div><div class="t c" style="left:986px;top:389px;width:29px;letter-spacing:-0.400px">ки...</div>
<div class="t c" style="left:1016px;top:356px;width:33px">При</div><div class="t c" style="left:1016px;top:373px;width:33px">меча</div><div class="t c" style="left:1016px;top:389px;width:33px">ние</div>
<div class="t" style="left:482px;top:413px">1</div>
<div class="a" style="left:560px;top:408px;width:23px;height:23px;background:#000"></div>
<div class="t" style="left:600px;top:413px;letter-spacing:-0.300px">466963.77</div>
<div class="t" style="left:663px;top:413px;letter-spacing:-0.350px">2178337....</div>
<div class="t" style="left:798px;top:413px">нет</div>
<div class="a" style="left:826px;top:408px;width:23px;height:23px;background:#000"></div>
<div class="a" style="left:852px;top:413px;width:11px;height:14px;overflow:hidden"><div class="t" style="left:0;top:0">че</div></div>
<div class="a" style="left:868px;top:418px;width:25px;height:2px;background:#7a7a7a"></div>
<div class="a" style="left:897px;top:413px;width:14px;height:14px;overflow:hidden"><div class="t" style="left:0;top:0">сп.</div></div>
<div class="a" style="left:918px;top:408px;width:23px;height:23px;background:#000"></div>
<div class="a" style="left:944px;top:413px;width:11px;height:14px;overflow:hidden"><div class="t" style="left:0;top:0">че</div></div>
<div class="t" style="left:482px;top:442px">2</div>
<div class="a" style="left:560px;top:437px;width:23px;height:23px;background:#000"></div>
<div class="t" style="left:600px;top:442px;letter-spacing:-0.300px">466965.03</div>
<div class="t" style="left:663px;top:442px;letter-spacing:-0.350px">2178342....</div>
<div class="t" style="left:798px;top:442px">нет</div>
<div class="a" style="left:826px;top:437px;width:23px;height:23px;background:#000"></div>
<div class="a" style="left:852px;top:442px;width:11px;height:14px;overflow:hidden"><div class="t" style="left:0;top:0">че</div></div>
<div class="a" style="left:868px;top:447px;width:25px;height:2px;background:#7a7a7a"></div>
<div class="a" style="left:897px;top:442px;width:14px;height:14px;overflow:hidden"><div class="t" style="left:0;top:0">сп.</div></div>
<div class="a" style="left:918px;top:437px;width:23px;height:23px;background:#000"></div>
<div class="a" style="left:944px;top:442px;width:11px;height:14px;overflow:hidden"><div class="t" style="left:0;top:0">че</div></div>
<div class="t" style="left:482px;top:471px">3</div>
<div class="a" style="left:560px;top:466px;width:23px;height:23px;background:#000"></div>
<div class="t" style="left:600px;top:471px;letter-spacing:-0.300px">466926.56</div>
<div class="t" style="left:663px;top:471px;letter-spacing:-0.350px">2178357....</div>
<div class="t" style="left:798px;top:471px">нет</div>
<div class="a" style="left:826px;top:466px;width:23px;height:23px;background:#000"></div>
<div class="a" style="left:852px;top:471px;width:11px;height:14px;overflow:hidden"><div class="t" style="left:0;top:0">че</div></div>
<div class="a" style="left:868px;top:476px;width:25px;height:2px;background:#7a7a7a"></div>
<div class="a" style="left:897px;top:471px;width:14px;height:14px;overflow:hidden"><div class="t" style="left:0;top:0">сп.</div></div>
<div class="a" style="left:918px;top:466px;width:23px;height:23px;background:#000"></div>
<div class="a" style="left:944px;top:471px;width:11px;height:14px;overflow:hidden"><div class="t" style="left:0;top:0">че</div></div>
<div class="t" style="left:482px;top:500px">4</div>
<div class="a" style="left:560px;top:495px;width:23px;height:23px;background:#000"></div>
<div class="t" style="left:600px;top:500px;letter-spacing:-0.300px">466903.17</div>
<div class="t" style="left:663px;top:500px;letter-spacing:-0.350px">2178366....</div>
<div class="t" style="left:798px;top:500px">нет</div>
<div class="a" style="left:826px;top:495px;width:23px;height:23px;background:#000"></div>
<div class="a" style="left:852px;top:500px;width:11px;height:14px;overflow:hidden"><div class="t" style="left:0;top:0">че</div></div>
<div class="a" style="left:868px;top:505px;width:25px;height:2px;background:#7a7a7a"></div>
<div class="a" style="left:897px;top:500px;width:14px;height:14px;overflow:hidden"><div class="t" style="left:0;top:0">сп.</div></div>
<div class="a" style="left:918px;top:495px;width:23px;height:23px;background:#000"></div>
<div class="a" style="left:944px;top:500px;width:11px;height:14px;overflow:hidden"><div class="t" style="left:0;top:0">че</div></div>
<div class="t" style="left:482px;top:529px">5</div>
<div class="a" style="left:560px;top:524px;width:23px;height:23px;background:#000"></div>
<div class="t" style="left:600px;top:529px;letter-spacing:-0.300px">466880.31</div>
<div class="t" style="left:663px;top:529px;letter-spacing:-0.350px">2178375....</div>
<div class="t" style="left:798px;top:529px">нет</div>
<div class="a" style="left:826px;top:524px;width:23px;height:23px;background:#000"></div>
<div class="a" style="left:852px;top:529px;width:11px;height:14px;overflow:hidden"><div class="t" style="left:0;top:0">че</div></div>
<div class="a" style="left:868px;top:534px;width:25px;height:2px;background:#7a7a7a"></div>
<div class="a" style="left:897px;top:529px;width:14px;height:14px;overflow:hidden"><div class="t" style="left:0;top:0">сп.</div></div>
<div class="a" style="left:918px;top:524px;width:23px;height:23px;background:#000"></div>
<div class="a" style="left:944px;top:529px;width:11px;height:14px;overflow:hidden"><div class="t" style="left:0;top:0">че</div></div>
<div class="t" style="left:482px;top:558px">6</div>
<div class="a" style="left:560px;top:553px;width:23px;height:23px;background:#000"></div>
<div class="t" style="left:600px;top:558px;letter-spacing:-0.300px">466879.40</div>
<div class="t" style="left:663px;top:558px;letter-spacing:-0.350px">2178372....</div>
<div class="t" style="left:798px;top:558px">нет</div>
<div class="a" style="left:826px;top:553px;width:23px;height:23px;background:#000"></div>
<div class="a" style="left:852px;top:558px;width:11px;height:14px;overflow:hidden"><div class="t" style="left:0;top:0">че</div></div>
<div class="a" style="left:868px;top:563px;width:25px;height:2px;background:#7a7a7a"></div>
<div class="a" style="left:897px;top:558px;width:14px;height:14px;overflow:hidden"><div class="t" style="left:0;top:0">сп.</div></div>
<div class="a" style="left:918px;top:553px;width:23px;height:23px;background:#000"></div>
<div class="a" style="left:944px;top:558px;width:11px;height:14px;overflow:hidden"><div class="t" style="left:0;top:0">че</div></div>
<div class="t" style="left:482px;top:587px">7</div>
<div class="a" style="left:560px;top:582px;width:23px;height:23px;background:#000"></div>
<div class="t" style="left:600px;top:587px;letter-spacing:-0.300px">466900.95</div>
<div class="t" style="left:663px;top:587px;letter-spacing:-0.350px">2178364....</div>
<div class="t" style="left:798px;top:587px">нет</div>
<div class="a" style="left:826px;top:582px;width:23px;height:23px;background:#000"></div>
<div class="a" style="left:852px;top:587px;width:11px;height:14px;overflow:hidden"><div class="t" style="left:0;top:0">че</div></div>
<div class="a" style="left:868px;top:592px;width:25px;height:2px;background:#7a7a7a"></div>
<div class="a" style="left:897px;top:587px;width:14px;height:14px;overflow:hidden"><div class="t" style="left:0;top:0">сп.</div></div>
<div class="a" style="left:918px;top:582px;width:23px;height:23px;background:#000"></div>
<div class="a" style="left:944px;top:587px;width:11px;height:14px;overflow:hidden"><div class="t" style="left:0;top:0">че</div></div>
<div class="t" style="left:482px;top:616px">8</div>
<div class="a" style="left:560px;top:611px;width:23px;height:23px;background:#000"></div>
<div class="t" style="left:600px;top:616px;letter-spacing:-0.300px">466902.31</div>
<div class="t" style="left:663px;top:616px;letter-spacing:-0.350px">2178362....</div>
<div class="t" style="left:798px;top:616px">нет</div>
<div class="a" style="left:826px;top:611px;width:23px;height:23px;background:#000"></div>
<div class="a" style="left:852px;top:616px;width:11px;height:14px;overflow:hidden"><div class="t" style="left:0;top:0">че</div></div>
<div class="a" style="left:868px;top:621px;width:25px;height:2px;background:#7a7a7a"></div>
<div class="a" style="left:897px;top:616px;width:14px;height:14px;overflow:hidden"><div class="t" style="left:0;top:0">сп.</div></div>
<div class="a" style="left:918px;top:611px;width:23px;height:23px;background:#000"></div>
<div class="a" style="left:944px;top:616px;width:11px;height:14px;overflow:hidden"><div class="t" style="left:0;top:0">че</div></div>
<div class="t" style="left:482px;top:645px">9</div>
<div class="a" style="left:560px;top:640px;width:23px;height:25px;background:#000"></div>
<div class="t" style="left:600px;top:645px;letter-spacing:-0.300px">466963.77</div>
<div class="t" style="left:663px;top:645px;letter-spacing:-0.350px">2178337....</div>
<div class="t" style="left:798px;top:645px">нет</div>
<div class="a" style="left:826px;top:640px;width:23px;height:25px;background:#000"></div>
<div class="a" style="left:852px;top:645px;width:11px;height:14px;overflow:hidden"><div class="t" style="left:0;top:0">че</div></div>
<div class="a" style="left:868px;top:650px;width:25px;height:2px;background:#7a7a7a"></div>
<div class="a" style="left:897px;top:645px;width:14px;height:14px;overflow:hidden"><div class="t" style="left:0;top:0">сп.</div></div>
<div class="a" style="left:918px;top:640px;width:23px;height:25px;background:#000"></div>
<div class="a" style="left:944px;top:645px;width:11px;height:14px;overflow:hidden"><div class="t" style="left:0;top:0">че</div></div>
<div class="a" style="left:478px;top:662px;width:591px;height:1px;background:#a9a9b4"></div>
<div class="a" style="left:478px;top:663px;width:591px;height:3px;background:#ebebeb"></div>
<div class="a" style="left:478px;top:666px;width:591px;height:10px;background:#fff"></div>
<div class="a" style="left:1050px;top:352px;width:18px;height:310px;background:#f0f0f0"></div>
<div class="a" style="left:1055px;top:410px;width:0;height:0;border-left:5px solid transparent;border-right:5px solid transparent;border-bottom:9px solid #d0d0d0"></div>
<div class="a" style="left:1055px;top:423px;width:10px;height:196px;background:#d0d0d0"></div>
<div class="a" style="left:1055px;top:649px;width:0;height:0;border-left:5px solid transparent;border-right:5px solid transparent;border-top:9px solid #d0d0d0"></div>
<!-- STATUS -->
<div class="a" id="status"></div>
<div class="t" style="left:9px;top:682px;color:#fff;text-shadow:0 0 0.5px rgba(255,255,255,.8)">Автосохранение выполнено успешно.</div>
<!-- window frame overlay (rounded corners) -->
<svg style="left:0;top:0;pointer-events:none" width="1124" height="701" viewBox="0 0 1124 701"><path d="M0 0H1124V701H0Z M0.500 8.500A8 8 0 0 1 8.500 0.500H1115.500A8 8 0 0 1 1123.500 8.500V693.500A7 7 0 0 1 1116.500 700.500H7.500A7 7 0 0 1 0.500 693.500Z" fill="#fff" fill-rule="evenodd"/><path d="M0.500 8.500A8 8 0 0 1 8.500 0.500H1115.500A8 8 0 0 1 1123.500 8.500V693.500A7 7 0 0 1 1116.500 700.500H7.500A7 7 0 0 1 0.500 693.500Z" fill="none" stroke="#b0b0b0" stroke-width="1"/></svg>
</body>
</html>
